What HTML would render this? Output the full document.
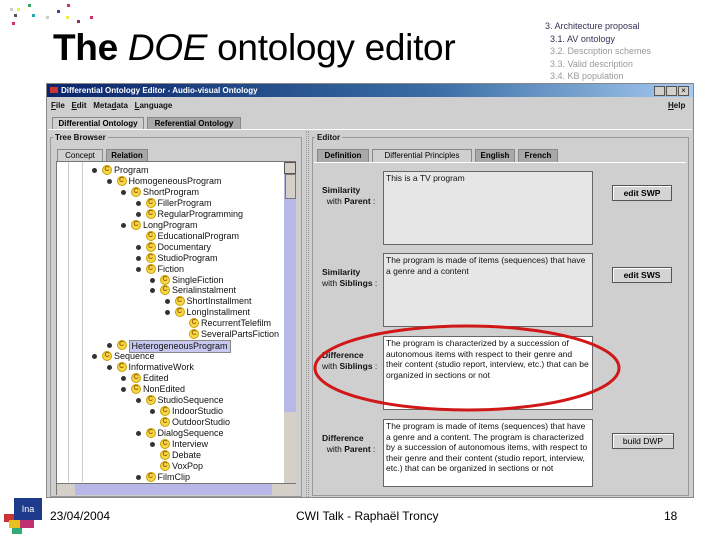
<!DOCTYPE html>
<html><head><meta charset="utf-8"><style>
*{margin:0;padding:0;box-sizing:border-box}
body{width:720px;height:540px;background:#fff;position:relative;overflow:hidden;font-family:"Liberation Sans",sans-serif}
.a{position:absolute}
.t{font-size:9px;color:#111;white-space:nowrap;line-height:11px}
.dot{position:absolute;width:3px;height:3px}
.ic{position:absolute;width:10px;height:10px;border-radius:50%;background:#f5d84a;border:1px solid #c9a000;font-size:7px;line-height:8px;text-align:center;color:#a06000;font-weight:bold}
.key{position:absolute;width:5px;height:5px;border-radius:50%;background:#333}
.box{position:absolute;border:1px solid #666;font-size:8.5px;line-height:10.5px;padding:1px 2px;color:#111}
.btn{position:absolute;background:#d4d4d4;border:1px solid #555;box-shadow:inset 1px 1px #fff;font-size:8.5px;font-weight:bold;text-align:center;line-height:14px}
.lbl{position:absolute;font-size:8.5px;line-height:11px;color:#111}
.tab{position:absolute;font-size:8px;line-height:12px;text-align:center;border:1px solid #888;border-bottom:none}
</style></head><body>
<div class="dot" style="left:10px;top:8px;background:#ccc"></div>
<div class="dot" style="left:14px;top:14px;background:#555"></div>
<div class="dot" style="left:17px;top:8px;background:#ee4"></div>
<div class="dot" style="left:12px;top:22px;background:#c36"></div>
<div class="dot" style="left:28px;top:4px;background:#3a6"></div>
<div class="dot" style="left:32px;top:14px;background:#2aa"></div>
<div class="dot" style="left:46px;top:16px;background:#ccc"></div>
<div class="dot" style="left:57px;top:10px;background:#448"></div>
<div class="dot" style="left:67px;top:4px;background:#c36"></div>
<div class="dot" style="left:66px;top:16px;background:#ee4"></div>
<div class="dot" style="left:77px;top:20px;background:#836"></div>
<div class="dot" style="left:90px;top:16px;background:#c36"></div>
<div class="a" style="left:53px;top:26px;font-size:37px;line-height:44px;color:#000;letter-spacing:-0.3px;white-space:nowrap"><b>The</b> <i>DOE</i> ontology editor</div>
<div class="a" style="left:545px;top:20px;font-size:9px;line-height:12.5px;color:#335">3. Architecture proposal<br>&nbsp;&nbsp;3.1. AV ontology<br><span style="color:#999">&nbsp;&nbsp;3.2. Description schemes<br>&nbsp;&nbsp;3.3. Valid description<br>&nbsp;&nbsp;3.4. KB population</span></div>

<div class="a" style="left:46px;top:83px;width:648px;height:415px;background:#cfcfcf;border:1px solid #888"></div>
<div class="a" style="left:47px;top:84px;width:646px;height:13px;background:linear-gradient(90deg,#0a246a,#3a6ea5 60%,#a6caf0);color:#fff;font-size:8px;font-weight:bold;line-height:13px;padding-left:14px">Differential Ontology Editor - Audio-visual Ontology</div>
<div class="a" style="left:50px;top:87px;width:8px;height:6px;background:#c33"></div>
<div class="a" style="left:654px;top:86px;width:36px;height:10px;display:flex;gap:1px"><div style="width:11px;background:#d4d0c8;border:1px solid #555"></div><div style="width:11px;background:#d4d0c8;border:1px solid #555"></div><div style="width:11px;background:#d4d0c8;border:1px solid #555;font-size:8px;line-height:8px;text-align:center">×</div></div>
<div class="a t" style="left:51px;top:100px;font-weight:bold;font-size:8px"><u>F</u>ile &nbsp; <u>E</u>dit &nbsp; Meta<u>d</u>ata &nbsp; <u>L</u>anguage</div>
<div class="a t" style="left:668px;top:100px;font-weight:bold;font-size:8px"><u>H</u>elp</div>
<div class="tab" style="left:52px;top:117px;width:92px;background:#cfcfcf;font-weight:bold">Differential Ontology</div>
<div class="tab" style="left:147px;top:117px;width:94px;background:#a8a8a8;font-weight:bold">Referential Ontology</div>
<div class="a" style="left:48px;top:129px;width:644px;height:1px;background:#fff"></div>

<div class="a" style="left:50px;top:137px;width:252px;height:360px;border:1px solid #999"></div>
<div class="a t" style="left:53px;top:132px;background:#cfcfcf;font-weight:bold;font-size:8px;padding:0 2px">Tree Browser</div>
<div class="tab" style="left:57px;top:149px;width:46px;background:#cfcfcf">Concept</div>
<div class="tab" style="left:106px;top:149px;width:42px;background:#a8a8a8;font-weight:bold">Relation</div>
<div class="a" style="left:56px;top:161px;width:240px;height:334px;background:#fff;border:1px solid #777"></div>
<div class="a" style="left:284px;top:162px;width:12px;height:321px;background:#b8b8e8"></div>
<div class="a" style="left:284px;top:162px;width:12px;height:12px;background:#d4d0c8;border:1px solid #555"></div>
<div class="a" style="left:285px;top:174px;width:11px;height:25px;background:#d4d0c8;border:1px solid #777"></div>
<div class="a" style="left:284px;top:412px;width:12px;height:71px;background:#d4d0c8"></div>
<div class="a" style="left:57px;top:483px;width:239px;height:12px;background:#b8b8e8;border-top:1px solid #777"></div>
<div class="a" style="left:57px;top:484px;width:12px;height:11px;background:#d4d0c8"></div>
<div class="a" style="left:69px;top:484px;width:6px;height:11px;background:#d4d0c8"></div>
<div class="a" style="left:272px;top:484px;width:24px;height:11px;background:#d4d0c8"></div>
<div class="a" style="left:82px;top:162px;width:1px;height:320px;background:#ccc"></div>
<div class="a" style="left:68px;top:162px;width:1px;height:320px;background:#ccc"></div>
<div id="tree"></div>

<div class="a" style="left:312px;top:137px;width:377px;height:359px;border:1px solid #999"></div>
<div class="a" style="left:306px;top:131px;width:3px;height:366px;border-left:1px dotted #999;border-right:1px dotted #999"></div>
<div class="a t" style="left:315px;top:132px;background:#cfcfcf;font-weight:bold;font-size:8px;padding:0 2px">Editor</div>
<div class="tab" style="left:317px;top:149px;width:52px;background:#a8a8a8;font-weight:bold">Definition</div>
<div class="tab" style="left:372px;top:149px;width:100px;background:#cfcfcf">Differential Principles</div>
<div class="tab" style="left:475px;top:149px;width:40px;background:#a8a8a8;font-weight:bold">English</div>
<div class="tab" style="left:518px;top:149px;width:40px;background:#a8a8a8;font-weight:bold">French</div>
<div class="a" style="left:314px;top:162px;width:372px;height:1px;background:#fff"></div>

<div class="lbl" style="left:322px;top:185px"><b>Similarity</b><br>&nbsp;&nbsp;with <b>Parent</b> :</div>
<div class="box" style="left:383px;top:171px;width:210px;height:74px;background:#e6e6e6">This is a TV program</div>
<div class="btn" style="left:612px;top:185px;width:60px;height:16px">edit SWP</div>

<div class="lbl" style="left:322px;top:267px"><b>Similarity</b><br>with <b>Siblings</b> :</div>
<div class="box" style="left:383px;top:253px;width:210px;height:74px;background:#e6e6e6">The program is made of items (sequences) that have a genre and a content</div>
<div class="btn" style="left:612px;top:267px;width:60px;height:16px">edit SWS</div>

<div class="lbl" style="left:322px;top:350px"><b>Difference</b><br>with <b>Siblings</b> :</div>
<div class="box" style="left:383px;top:336px;width:210px;height:74px;background:#fff">The program is characterized by a succession of autonomous items with respect to their genre and their content (studio report, interview, etc.) that can be organized in sections or not</div>

<div class="lbl" style="left:322px;top:433px"><b>Difference</b><br>&nbsp;&nbsp;with <b>Parent</b> :</div>
<div class="box" style="left:383px;top:419px;width:210px;height:68px;background:#fff">The program is made of items (sequences) that have a genre and a content. The program is characterized by a succession of autonomous items, with respect to their genre and their content (studio report, interview, etc.) that can be organized in sections or not</div>
<div class="btn" style="left:612px;top:433px;width:62px;height:16px;font-weight:normal">build DWP</div>

<svg class="a" style="left:0;top:0" width="720" height="540"><ellipse cx="467" cy="368" rx="152" ry="42" fill="none" stroke="#d01818" stroke-width="3"/></svg>

<div class="a" style="left:14px;top:498px;width:28px;height:22px;background:#1e3a8a;color:#fff;font-size:9px;line-height:22px;text-align:center">Ina</div>
<div class="a" style="left:4px;top:514px;width:10px;height:8px;background:#c33"></div>
<div class="a" style="left:9px;top:520px;width:12px;height:8px;background:#e8c020"></div>
<div class="a" style="left:20px;top:520px;width:14px;height:8px;background:#c03070"></div>
<div class="a" style="left:12px;top:528px;width:10px;height:6px;background:#3a7"></div>
<div class="a" style="left:50px;top:509px;font-size:12px">23/04/2004</div>
<div class="a" style="left:296px;top:509px;font-size:12px">CWI Talk - Raphaël Troncy</div>
<div class="a" style="left:664px;top:509px;font-size:12px">18</div>

<script>
var rows=[["Program",0],["HomogeneousProgram",1],["ShortProgram",2],["FillerProgram",3],["RegularProgramming",3],["LongProgram",2],["EducationalProgram",3],["Documentary",3],["StudioProgram",3],["Fiction",3],["SingleFiction",4],["Serialinstalment",4],["ShortInstallment",5],["LongInstallment",5],["RecurrentTelefilm",6],["SeveralPartsFiction",6],["HeterogeneousProgram",1],["Sequence",0],["InformativeWork",1],["Edited",2],["NonEdited",2],["StudioSequence",3],["IndoorStudio",4],["OutdoorStudio",4],["DialogSequence",3],["Interview",4],["Debate",4],["VoxPop",4],["FilmClip",3]];
var h="",nokey={6:1,14:1,15:1,23:1,26:1,27:1};
rows.forEach(function(r,i){var y=165+i*10.95,k=92+r[1]*14.5;
if(!nokey[i])h+='<div class="key" style="left:'+k+'px;top:'+(y+3)+'px"></div>';
h+='<div class="ic" style="left:'+(k+10)+'px;top:'+(y)+'px">C</div>';
var st=i==16?'background:#c8c8f0;border:1px solid #888;padding:0 2px;':'';
h+='<div class="a t" style="left:'+(k+22)+'px;top:'+y+'px;'+st+'">'+r[0]+'</div>';});
document.getElementById("tree").innerHTML=h;
</script>
</body></html>
